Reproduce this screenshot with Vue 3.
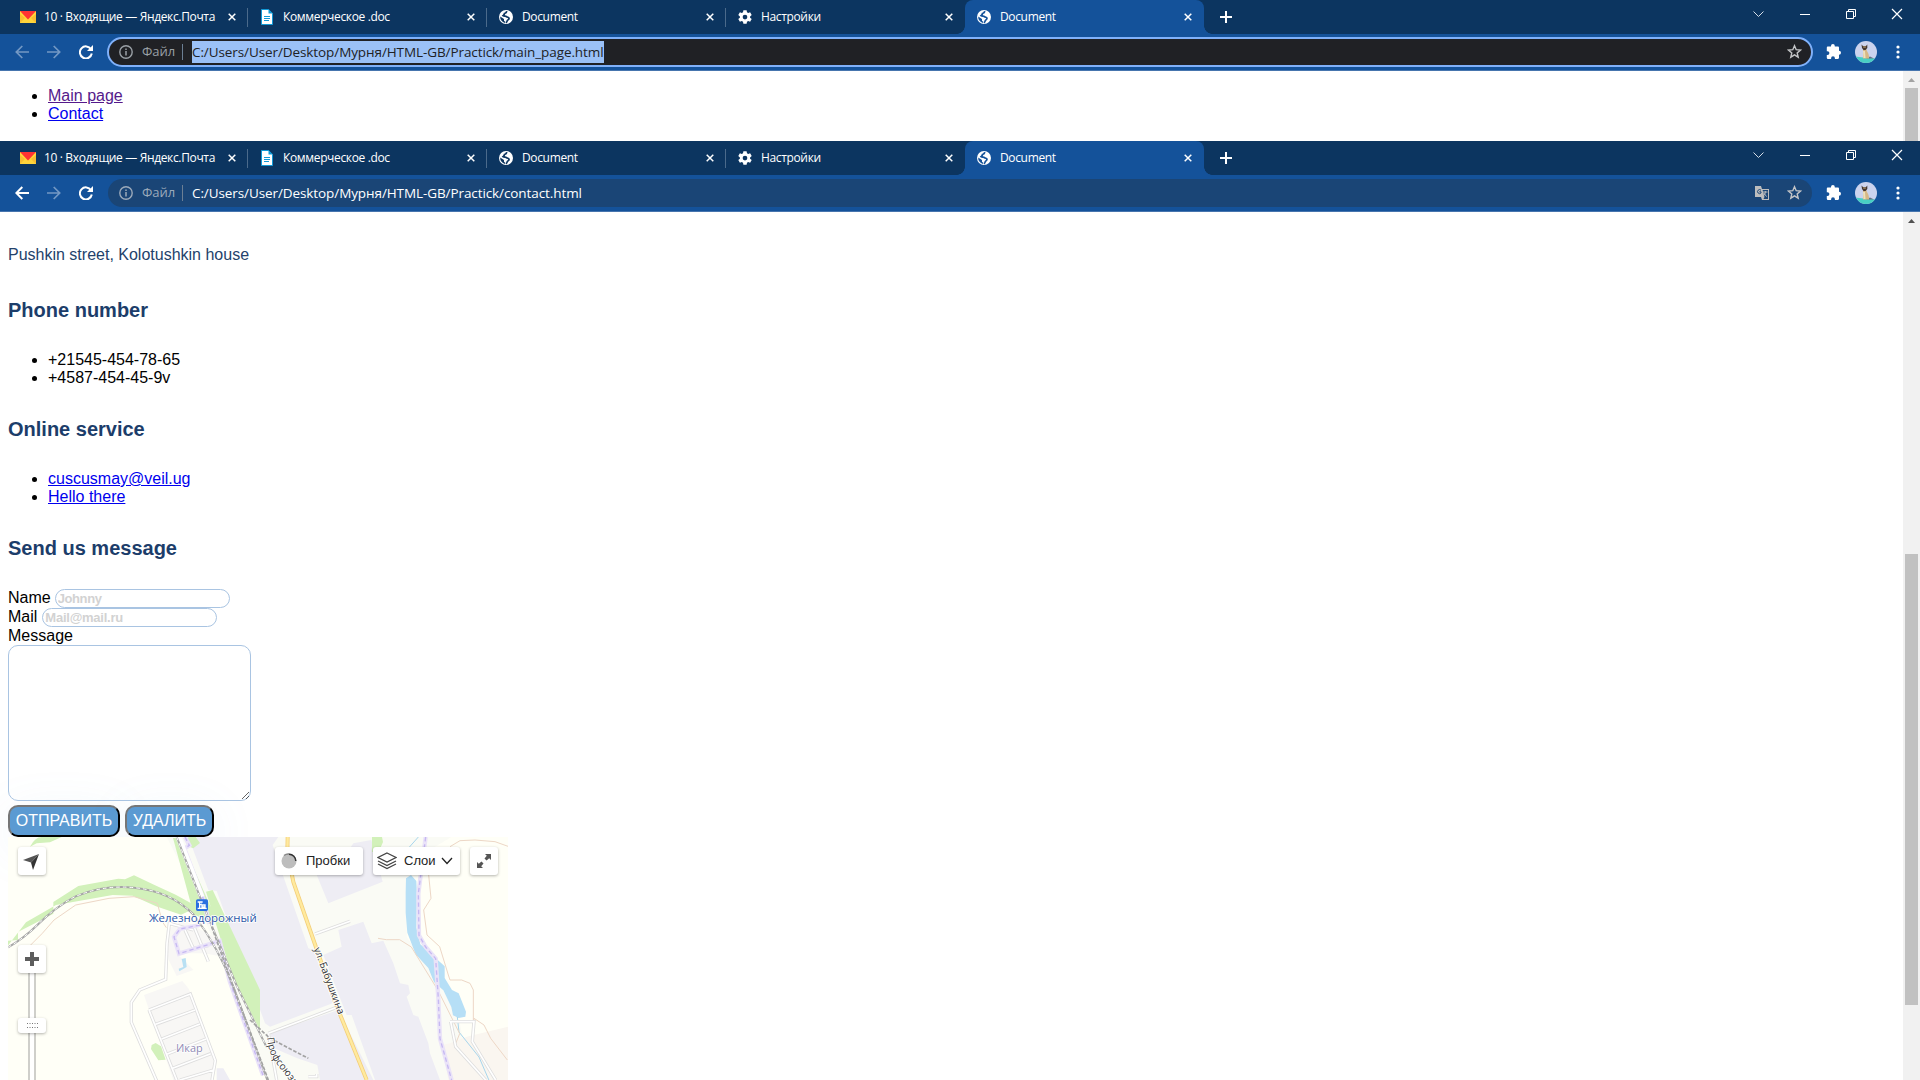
<script setup>
const tabs = [
  { icon: 'mail', title: '10 · Входящие — Яндекс.Почта' },
  { icon: 'doc', title: 'Коммерческое .doc' },
  { icon: 'globe', title: 'Document' },
  { icon: 'gear', title: 'Настройки' },
  { icon: 'globe', title: 'Document', active: true },
]
const windows = [
  { id: 'main', url: 'C:/Users/User/Desktop/Мурня/HTML-GB/Practick/main_page.html', focused: true },
  { id: 'contact', url: 'C:/Users/User/Desktop/Мурня/HTML-GB/Practick/contact.html', focused: false },
]
</script>

<template>
  <main class="screen">
    <section v-for="w in windows" :key="w.id" class="window" :class="w.id">
      <header class="tabstrip">
        <div v-for="(t, i) in tabs" :key="i" class="tab" :class="{ active: t.active, divided: i < 3 }">
          <span class="favicon">
            <svg v-if="t.icon === 'mail'" width="16" height="12" viewBox="0 0 16 12"><path fill="#ffd43b" d="M0 0h16v12H0z" /><path fill="#f8bd30" d="M0 12V3l5 4zM16 12V3l-5 4z" /><path fill="#f33" d="M0 0h16L8 8.500z" /></svg>
            <svg v-else-if="t.icon === 'doc'" width="12" height="16" viewBox="0 0 12 16"><path fill="#fff" stroke="#1099d6" d="M.5.5h7l4 4v11H.5z" /><path fill="#1099d6" d="M7.500 0v4.500H12z" /><path stroke="#1099d6" d="M3 7.500h6M3 9.500h6M3 11.500h5" /></svg>
            <svg v-else-if="t.icon === 'globe'" width="14" height="14" viewBox="0 0 14 14"><circle cx="7" cy="7" r="7" fill="#fff" /><path fill="none" :stroke="t.active ? '#14529a' : '#0c3560'" stroke-width="1.700" d="M7.800 1.200c-.2 1.600-1 2-2.300 2.300-.3 1.500-1 1.700-1.500 2.100 1 .9 2.600.2 3.500 1 .8.900 2.200.5 2.500 1.600.2 1.500-1.300 1.600-1.700 2.400-.2.900-.6 1.500-1.300 2.200" /><path :fill="t.active ? '#14529a' : '#0c3560'" d="M1.200 6.500 5 9v1.700l1.200 1-.2 1.200A6 6 0 0 1 1.200 6.500z" /></svg>
            <svg v-else width="14" height="14" viewBox="0 0 14 14"><path fill="#fff" fill-rule="evenodd" d="M5.400.3h3.200l.4 2 1.200.7 1.900-.7 1.600 2.800-1.600 1.300v1.300l1.600 1.300-1.600 2.700-1.900-.7-1.200.7-.4 2H5.400l-.4-2-1.200-.7-1.900.7L.3 9l1.600-1.300V6.400L.3 5.100l1.600-2.800 1.900.7L5 2.300zM7 4.700a2.300 2.300 0 1 0 0 4.700 2.300 2.300 0 0 0 0-4.700z" /></svg>
          </span>
          <span class="title">{{ t.title }}</span>
          <svg class="close" width="8" height="8" viewBox="0 0 8 8"><path d="m.7.700 6.600 6.600m0-6.600L.7 7.300" stroke="#fff" stroke-width="1.500" /></svg>
        </div>
        <svg class="plus" width="12" height="12" viewBox="0 0 12 12"><path d="M6 0v12M0 6h12" stroke="#fff" stroke-width="2" /></svg>
        <div class="controls">
          <svg width="46" height="28" viewBox="0 0 46 28"><path d="m17.500 11.500 5 5 5-5" fill="none" stroke="#d5dde7" /></svg>
          <svg width="46" height="28" viewBox="0 0 46 28"><path d="M18 14.500h10" stroke="#fff" /></svg>
          <svg width="46" height="28" viewBox="0 0 46 28"><path d="M18.500 11.500h7v7h-7zM20.500 11V9.500h7v7H26" fill="none" stroke="#fff" /></svg>
          <svg width="46" height="28" viewBox="0 0 46 28"><path d="m18 9 10 10m0-10L18 19" stroke="#fff" stroke-width="1.200" /></svg>
        </div>
      </header>

      <nav class="toolbar">
        <svg class="nav" :class="{ dim: w.focused }" viewBox="0 0 14 14"><path d="M14 7H1.500M7.300 1 1.300 7l6 6" /></svg>
        <svg class="nav dim" viewBox="0 0 14 14"><path d="M0 7h12.500M6.700 1l6 6-6 6" /></svg>
        <svg class="nav" viewBox="0 0 14 14"><path d="M12 4.200A6 6 0 1 0 12.800 8.500" /><path class="solid" d="M14 0v6H8z" /></svg>
        <div class="omnibox">
          <svg class="info" width="14" height="14" viewBox="0 0 14 14"><circle cx="7" cy="7" r="6.200" fill="none" stroke="currentColor" stroke-width="1.400" /><path d="M7 6v4.500M7 3.500v1.400" stroke="currentColor" stroke-width="1.500" /></svg>
          <span class="scheme">Файл</span>
          <span class="url">{{ w.url }}</span>
          <span class="grow"></span>
          <svg v-if="!w.focused" class="translate" width="14" height="14" viewBox="0 0 14 14"><path fill="#bdbdbd" d="M0 0h6l1 3h7v11H7l-1-3H0z" /><path fill="#1a4576" d="M7.600 4H13v9H8.500l1-2z" /><path d="M6 4.200A2 2 0 1 0 6 7V5.800H4.300" fill="none" stroke="#1a4576" /><path d="M8 6h4.500M10.300 5v1c0 2-1 3.300-2 4m.5-3c.7 1.500 1.800 2.500 3 3.500" fill="none" stroke="#bdbdbd" /></svg>
          <svg class="star" width="15" height="15" viewBox="0 0 15 15"><path d="m7.500 1.700 1.700 4 4.300.4-3.300 2.800 1 4.300-3.700-2.300-3.700 2.300 1-4.300L1.500 6.100l4.300-.4z" fill="none" stroke="#c4c5c7" stroke-width="1.400" /></svg>
        </div>
        <svg class="puzzle" width="15" height="15" viewBox="0 0 15 15"><path fill="#fff" d="M5 2a1.900 1.900 0 0 1 3.800 0v.6h3c.7 0 1.200.5 1.200 1.200v3a2 2 0 0 1 0 4v3c0 .700-.5 1.200-1.200 1.200H8.900v-.8a1.900 1.900 0 0 0-3.800 0v.8H2A1.200 1.200 0 0 1 .8 13.800V11h.7a1.900 1.900 0 0 0 0-3.800H.8V3.800c0-.700.5-1.200 1.200-1.200h3z" /></svg>
        <svg class="avatar" width="22" height="22" viewBox="0 0 22 22"><clipPath :id="'face-' + w.id"><circle cx="11" cy="11" r="11" /></clipPath><g :clip-path="`url(#face-${w.id})`"><path fill="#cbd3ee" d="M0 0h22v22H0z" /><path fill="#48cfc4" d="M0 15.500q10 1.500 22 2v5H0z" /><path fill="#647084" d="M11 17.500h8l-4-2z" /><path fill="#d6b886" d="M8 8h3.500c0 3 3 4 2.500 9.500H8z" /><path fill="#ece0bd" d="M8 10h2l.5 7h-2z" /><path fill="#42352f" d="m6.500 3.500 1.500 1.500h3l1.300-1.500v3.500L10.500 9h-2L7 7z" /><path fill="#d6b886" d="M8.200 5.500h2.600v1H8.200z" /></g></svg>
        <svg class="dots" width="4" height="14" viewBox="0 0 4 14"><circle cx="2" cy="2" r="1.600" /><circle cx="2" cy="7" r="1.600" /><circle cx="2" cy="12" r="1.600" /></svg>
      </nav>

      <div class="viewport">
        <article v-if="w.focused" class="page">
          <ul class="links">
            <li><a class="visited">Main page</a></li>
            <li><a>Contact</a></li>
          </ul>
        </article>

        <article v-else class="page contact-page">
          <p class="address">Pushkin street, Kolotushkin house</p>
          <h3>Phone number</h3>
          <ul>
            <li>+21545-454-78-65</li>
            <li>+4587-454-45-9v</li>
          </ul>
          <h3>Online service</h3>
          <ul>
            <li><a>cuscusmay@veil.ug</a></li>
            <li><a>Hello there</a></li>
          </ul>
          <h3>Send us message</h3>
          <form>
            <div class="field"><label>Name</label><input placeholder="Johnny"></div>
            <div class="field mail"><label>Mail</label><input placeholder="Mail@mail.ru"></div>
            <div class="field message">Message</div>
            <textarea></textarea>
            <div class="buttons">
              <button type="button">ОТПРАВИТЬ</button>
              <button type="button">УДАЛИТЬ</button>
            </div>
          </form>

          <div class="map">
            <svg class="tiles" width="500" height="243" viewBox="24 21 1500 729">
              <path fill="#fffff7" d="M24 21h1500v729H24z" />
              <!-- built-up strip and industrial zones -->
              <path fill="#fafbf5" d="M500 21h880l-130 60-30 80 0 160 100 140 60 120 30 169H800L640 330 540 100z" />
              <path fill="#fffff7" d="M1524 21h-170l-100 60-20 150 20 110 110 170 30 90 130 160z" />
              <path fill="#faf6f0" d="M1326 645 1350 640 1400 620 1524 590V750H1345z" />
              <path fill="#eeedf4" d="M565 21h270l-17 24 22 65 85 245 15 5 58 160-188 70-15-10-145-397-25-3z" />
              <path fill="#eeedf4" d="m810 610 205-70 105 210H960l-8-45-60-20-70-30z" />
              <path fill="#eeedf4" d="m1015 300 75-25 25 65 35-8 30 68 20 60 25 5 5 25-10 10 20 55 15 5 30 80 5 30 30 80h-195l-70-195h-15L970 375l55-25zM940 110l45 110 163-65-34-125-54 10-20 30zM650 715l20 0 20 35h-40z" />
              <path fill="#f8f7f5" d="m432 495 115-42 20 25 80 230-10 42H520zM500 300l50-30 90 50 30 60-60-10-80 0 50 50-50 18-25-50z" />
              <!-- greenery -->
              <path fill="#d2f1ba" d="M90 50q15-29 35-29h60l-35 16-40 3zM24 332l30-2v-24l106-55v-35l75-48 120-22 20 2 27-12 60 28 65 30 45 25-53-195h22l110 250-20 5-65-35-23 10-75-25-70-32-60-2-170 30-90 52-70 90-72 55zM565 21h22l13 18-20 16-20-8zM618 185l20-5 142 300v120l-80-150zM1116 21h30l3 15-13 30h-20zM455 645l12-6 16 10 14 40-22 2-22-34z" />
              <path fill="#b9e0f3" d="m545 387 12-3 3 27-22 13-2-8 14-5z" />
              <!-- river -->
              <path fill="#b6dff6" d="m1218 145 15-10 16 18 2 45-2 95 12 50 73 66 0 35 22 36 20 10 22 55-2 15-20 4-17-8-5-25-24-50-28-25-17-42-38-41-25-65-5-60 0-60z" />
              <path fill="none" stroke="#a7d5ec" stroke-width="3" d="m1255 21-40 45m157 495 5 45 60 75 30 70" />
              <!-- country paths -->
              <path fill="none" stroke="#edd7c6" stroke-width="3" d="m92 345 35-35 35-40 65-45 100-20 75-5 70 20 15 55 12 18M1134 325l25 4 40 0 35 22 80 130 45 90 20 40-12 30M1350 50l30-18 45-2 60 5 39 14M1286 135l7 70-22 35 10 75 38 35 26 85 5 15 35 0 25 10 10 20 0 135 2-50 30 20 20 40 50 65" />
              <!-- service roads -->
              <g fill="none" stroke="#dedede" stroke-width="10">
                <path d="m580 300-72-20-7 60-4 108-78 32-25 37v60l80 185M447 540l124-48 75 200-10 58M447 540l87 220M467 583l118-43M485 627l115-45M502 672l116-45M518 715l114-44M540 750l100-30M555 300l25 55 45-8M580 285l45 110M945 312l105-38M805 610l205-78M805 610l25 140M925 740h25v-8M1350 575h72l-5 60 70 115M1352 575l15 75 90 100" />
                <path stroke="#fff" stroke-width="5" d="m580 300-72-20-7 60-4 108-78 32-25 37v60l80 185M447 540l124-48 75 200-10 58M447 540l87 220M467 583l118-43M485 627l115-45M502 672l116-45M518 715l114-44M540 750l100-30M555 300l25 55 45-8M580 285l45 110M945 312l105-38M805 610l205-78M805 610l25 140M925 740h25v-8M1350 575h72l-5 60 70 115M1352 575l15 75 90 100" />
              </g>
              <path fill="none" stroke="#f4cf7a" stroke-width="12" d="m863 21-1 45 18 90 125 360 95 234" />
              <path fill="none" stroke="#ffea9e" stroke-width="7" d="m863 21-1 45 18 90 125 360 95 234" />
              <!-- municipal boundaries -->
              <g fill="none">
                <path stroke="#eae3f8" stroke-width="13" d="m555 21 13 25-15 10 55 145 20 80M600 285l-60 12-18 24 15 50 122-38 30 120 100 283M1277 21l-22 170 2 125 20 35 30 35 8 120 5 120 35 124" />
                <path stroke="#c6b8f2" stroke-width="4" stroke-dasharray="13 9" d="m555 21 13 25-15 10 55 145 20 80M600 285l-60 12-18 24 15 50 122-38 30 120 100 283M1277 21l-22 170 2 125 20 35 30 35 8 120 5 120 35 124" />
              </g>
              <!-- railway -->
              <g fill="none">
                <path stroke="#fff" stroke-width="17" d="m535 21 70 180" />
                <path stroke="#a6a6a6" stroke-width="6" d="M24 352q45-25 88-67 55-55 115-86 85-35 175-26 110 10 180 82 75 100 120 220l100 275M530 21l80 206 100 240 90 185" />
                <path stroke="#fff" stroke-width="3" stroke-dasharray="11 9" d="M24 352q45-25 88-67 55-55 115-86 85-35 175-26 110 10 180 82 75 100 120 220l100 275M530 21l80 206 100 240 90 185" />
                <path stroke="#a3a3a3" stroke-width="5" stroke-dasharray="11 5" d="m635 290 70 195 100 265M750 570l60 55 115 60" />
              </g>
              <rect x="588" y="208" width="36" height="35" rx="5" fill="#2b70e0" />
              <path fill="#fff" d="M593 214h15v4h-3v5h12v10h3v4h-27v-4h4v-15h-4zm8 4v4h3v-4zm0 8v7h3v-7zm7 1v2h5v-2z" />
              <text class="label place" x="447" y="276" textLength="323" lengthAdjust="spacingAndGlyphs">Железнодорожный</text>
              <text class="label area" x="528" y="666" textLength="80" lengthAdjust="spacingAndGlyphs">Икар</text>
              <text class="label road" transform="translate(941 356) rotate(69.500)" textLength="212" lengthAdjust="spacingAndGlyphs">ул. Бабушкина</text>
              <path id="prof" fill="none" d="M801 623q5 50 30 80 25 30 60 80" />
              <text class="label road"><textPath href="#prof">Профсоюзная</textPath></text>
            </svg>

            <div class="ctl locate"><svg width="28" height="28" viewBox="0 0 28 28"><path fill="#555" d="M21 7 5 13l8 2.500z" /><path fill="#333" d="m21 7-6 16-2-7.500z" /></svg></div>
            <div class="ctl traffic"><svg width="16" height="16" viewBox="0 0 16 16"><circle cx="8" cy="8" r="7.500" fill="#bdbdbd" /><path d="M8 1.200A6.800 6.800 0 0 1 14.800 8" fill="none" stroke="#333" stroke-width="1.500" /><path d="M3 2.500A7 7 0 0 1 8 1" fill="none" stroke="#888" stroke-width="1.500" /></svg><span>Пробки</span></div>
            <div class="ctl layers"><svg width="20" height="18" viewBox="0 0 20 18"><path d="m10 1 9 4.500L10 10 1 5.500zM1 9l9 4.500L19 9M1 12l9 4.500 9-4.500" fill="none" stroke="#444" stroke-width="1.300" /></svg><span>Слои</span><svg width="12" height="8" viewBox="0 0 12 8"><path d="m1 1 5 5.500L11 1" fill="none" stroke="#222" stroke-width="1.300" /></svg></div>
            <div class="ctl full"><svg width="14" height="14" viewBox="0 0 14 14"><path fill="#555" d="M14 0v6l-1.800-1.800L9.500 6.500l-2-2 2.300-2.700L8 0zM0 14V8l1.800 1.800L4.500 7.500l2 2-2.300 2.700L6 14z" /></svg></div>
            <div class="track"></div>
            <div class="ctl zoom"><svg width="14" height="14" viewBox="0 0 14 14"><path d="M7 0v14M0 7h14" stroke="#5d5d5d" stroke-width="4" /></svg></div>
            <div class="ctl grip"><svg width="11" height="5" viewBox="0 0 11 5"><path d="M0 .5h11M0 4.500h11" stroke="#777" stroke-dasharray="1 1.500" /></svg></div>
          </div>
        </article>

        <aside class="scrollbar">
          <svg width="7" height="4" viewBox="0 0 7 4"><path d="M0 4 3.500 0 7 4z" /></svg>
          <i class="thumb"></i>
        </aside>
      </div>
    </section>
  </main>
</template>

<style>
body { overflow: hidden; background: #fff; }
</style>

<style scoped>
* { box-sizing: border-box; }
svg { display: block; flex: none; }
.screen { width: 1920px; height: 1080px; overflow: hidden; display: flex; flex-direction: column; background: #fff; font-family: "Liberation Sans", Arial, sans-serif; font-size: 16px; line-height: 18px; }
.window { display: flex; flex-direction: column; width: 1920px; }
.main { height: 141px; }
.contact { height: 939px; }

.tabstrip { display: flex; height: 34px; flex: none; padding-left: 9px; background: #0c3560; color: #fff; font-family: "Open Sans", "Noto Sans", sans-serif; }
.tab { position: relative; display: flex; align-items: center; width: 239px; padding: 0 12px 0 11px; }
.tab.divided::after { content: ""; position: absolute; right: 0; top: 8px; width: 1px; height: 19px; background: #4b6a8b; }
.tab.active { background: #14529a; border-radius: 8px 8px 0 0; }
.tab.active::before, .tab.active::after { content: ""; position: absolute; bottom: 0; width: 8px; height: 8px; }
.tab.active::before { left: -8px; background: radial-gradient(circle at 0 0, transparent 7.500px, #14529a 8px); }
.tab.active::after { right: -8px; background: radial-gradient(circle at 100% 0, transparent 7.500px, #14529a 8px); }
.favicon { width: 16px; display: flex; justify-content: center; margin-right: 8px; }
.title { flex: 1; font-size: 12px; letter-spacing: -0.35px; white-space: nowrap; line-height: 16px; }
.plus { align-self: center; margin-left: 16px; }
.controls { display: flex; margin-left: auto; }

.toolbar { display: flex; align-items: center; height: 37px; flex: none; padding: 0 0 1px 15px; background: #14529a; border-bottom: 1px solid #4675ae; font-family: "Open Sans", "Noto Sans", sans-serif; }
.nav { width: 14px; height: 14px; margin-right: 18px; fill: none; stroke: #fff; stroke-width: 2; }
.nav .solid { fill: #fff; stroke: none; }
.nav.dim { stroke: #7398c4; stroke-width: 1.700; }
.omnibox { display: flex; align-items: center; width: 1704px; height: 28px; margin-left: -3px; border-radius: 15px; background: #1a4576; color: #9caaba; padding: 0 11px; }
.main .omnibox { width: 1706px; height: 30px; margin: 0 -1px 0 -4px; padding: 0 10px; border: 2px solid #80b1fa; background: #202125; color: #9aa0a6; }
.scheme { margin-left: 9px; width: 41px; height: 16px; line-height: 15px; border-right: 1px solid #6c7f94; font-size: 13px; }
.url { margin-left: 9px; line-height: 22px; font-size: 13.500px; letter-spacing: -0.090px; color: #fff; white-space: nowrap; }
.main .url { background: #9bc1f7; color: #202125; }
.grow { flex: 1; }
.translate { margin-right: 18px; }
.star { margin-right: -1px; }
.puzzle { margin-left: 14px; }
.avatar { margin-left: 14px; }
.dots { margin-left: 19px; fill: #fff; }

.viewport { display: flex; flex: 1; min-height: 0; }
.page { flex: 1; min-width: 0; padding: 0 8px; overflow: hidden; }
.scrollbar { display: flex; flex-direction: column; align-items: center; width: 17px; padding-top: 7px; background: #f1f1f1; fill: #a3a3a3; }
.contact .scrollbar { fill: #505050; }
.thumb { width: 13px; background: #c1c1c1; margin-top: 6px; height: 53px; }
.contact .thumb { margin-top: 331px; height: 451px; flex: none; }
ul { margin: 0; padding-left: 40px; }
.links { margin-top: 16px; }
a { color: #0000ee; text-decoration: underline; }
a.visited { color: #551a8b; }

.address { margin: 34px 0 35px; color: #23426b; }
h3 { margin: 0; padding-bottom: 29px; font-size: 20px; line-height: 23px; color: #1c3d6a; }
.contact-page ul { margin-bottom: 31px; }
.field { display: flex; height: 19px; line-height: 18px; }
.field input { width: 175px; height: 19px; margin-left: 4px; padding: 1px 2px; border: 1px solid #a9c4e2; border-radius: 10px; background: #fff; font: 700 13px "Liberation Sans", Arial, sans-serif; letter-spacing: -0.400px; }
.field.mail input { margin-left: 5px; letter-spacing: -0.250px; }
.field input::placeholder { color: #d2d2d2; opacity: 1; }
.field.message { height: 18px; }
textarea { display: block; width: 243px; height: 156px; border: 1px solid #a9c4e2; border-radius: 10px; background: transparent; resize: both; position: relative; }
.buttons { display: flex; gap: 5px; margin-top: 4px; }
button { height: 32px; width: 112px; padding: 0; border: 2px outset #767676; border-color: #767676 #212121 #212121 #767676; border-radius: 10px; background: #5b9ad2; color: #fff; font: 16px "Liberation Sans", Arial, sans-serif; box-shadow: 0 10px 50px rgba(91, 154, 210, 0.100); }
button + button { width: 89px; }

.map { position: relative; width: 500px; height: 243px; overflow: hidden; font: 13px/28px "Liberation Sans", Arial, sans-serif; color: #222; }
.ctl { position: absolute; display: flex; align-items: center; height: 28px; background: #fff; border-radius: 3px; box-shadow: 0 1px 3px rgba(0, 0, 0, 0.300); }
.locate { left: 10px; top: 10px; width: 28px; }
.traffic { left: 267px; top: 10px; width: 88px; padding-left: 6px; gap: 9px; }
.layers { left: 365px; top: 10px; width: 87px; padding-left: 4px; gap: 5px; }
.layers span { margin-left: 2px; }
.full { left: 462px; top: 10px; width: 28px; justify-content: center; }
.zoom { left: 10px; top: 108px; width: 28px; justify-content: center; }
.grip { left: 10px; top: 181px; width: 28px; height: 15px; justify-content: center; }
.track { position: absolute; left: 20px; top: 136px; width: 8px; height: 107px; background: #fff; border: solid #cfcfca; border-width: 0 2px; }
.label { font-family: "Open Sans", "Noto Sans", sans-serif; font-size: 34px; paint-order: stroke; stroke: #fff; stroke-width: 5px; stroke-linejoin: round; }
.place { fill: #2c57a8; }
.area { fill: #8f8ab5; }
.road { font-size: 30px; fill: #333; }
</style>
